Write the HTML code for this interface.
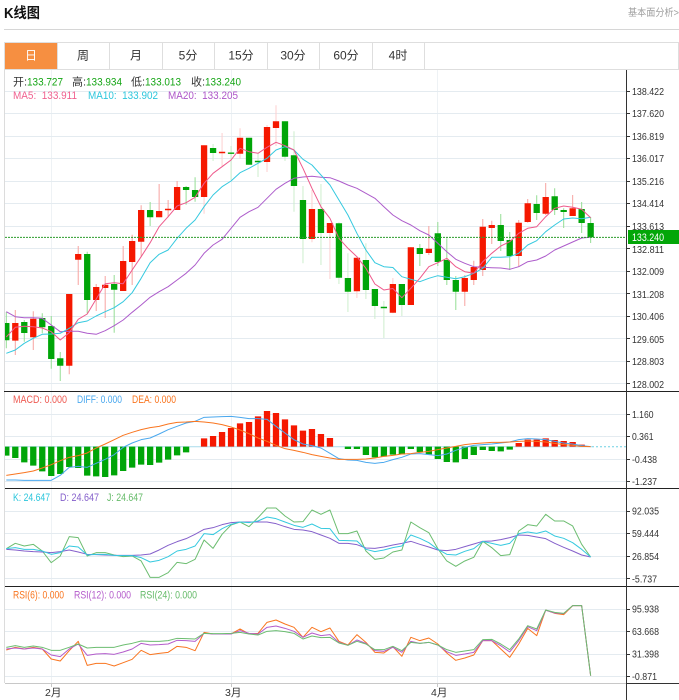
<!DOCTYPE html>
<html lang="zh">
<head>
<meta charset="utf-8">
<title>K线图</title>
<style>
html,body{margin:0;padding:0;background:#fff;width:679px;height:700px;overflow:hidden}
svg{display:block;position:absolute;left:0;top:0;filter:blur(.3px)}
text{font-family:"Liberation Sans","Noto Sans CJK SC",sans-serif;font-size:11px;fill:#333;white-space:pre}
.ax{font-size:10px;fill:#333}
.n{fill:none;stroke-linejoin:round;vector-effect:non-scaling-stroke}
</style>
</head>
<body>
<svg width="679" height="700" viewBox="0 0 679 700" xmlns="http://www.w3.org/2000/svg">
<defs><clipPath id="c"><rect x="5" y="70" width="621" height="630"/></clipPath></defs>

<text x="4" y="18" style="font-size:14.5px;font-weight:bold;fill:#111" textLength="36" lengthAdjust="spacingAndGlyphs">K线图</text>
<text x="628" y="16" style="font-size:10px;fill:#a0a0a0" textLength="51" lengthAdjust="spacingAndGlyphs">基本面分析&gt;</text>
<path d="M4 29.5H679" stroke="#d6d6d6" stroke-width="1"/>

<!-- tabs -->
<rect x="5" y="43" width="52.5" height="26" fill="#f68f41"/>
<path d="M4.5 42.5H678.5V69.5H4.5Z M57.5 43V69 M109.5 43V69 M162.5 43V69 M214.5 43V69 M267.5 43V69 M319.5 43V69 M372.5 43V69 M424.5 43V69" fill="none" stroke="#dedede" stroke-width="1"/>
<text x="31" y="59.5" text-anchor="middle" style="font-size:12px;fill:#fff">日</text>
<text x="83" y="59.5" text-anchor="middle" style="font-size:12px">周</text>
<text x="136" y="59.5" text-anchor="middle" style="font-size:12px">月</text>
<text x="188" y="59.5" text-anchor="middle" style="font-size:12px">5分</text>
<text x="241" y="59.5" text-anchor="middle" style="font-size:12px">15分</text>
<text x="293" y="59.5" text-anchor="middle" style="font-size:12px">30分</text>
<text x="346" y="59.5" text-anchor="middle" style="font-size:12px">60分</text>
<text x="398" y="59.5" text-anchor="middle" style="font-size:12px">4时</text>

<!-- grid -->
<path d="M51.5 70V683 M231.5 70V683 M437.5 70V683" stroke="#eef2f5" stroke-width="1"/>
<path d="M5 91.5H626 M5 113.5H626 M5 136.5H626 M5 158.5H626 M5 181.5H626 M5 203.5H626 M5 226.5H626 M5 248.5H626 M5 271.5H626 M5 293.5H626 M5 316.5H626 M5 338.5H626 M5 361.5H626 M5 383.5H626 M5 414.5H626 M5 436.5H626 M5 459.5H626 M5 481.5H626 M5 511.5H626 M5 533.5H626 M5 556.5H626 M5 578.5H626 M5 609.5H626 M5 631.5H626 M5 654.5H626 M5 676.5H626" stroke="#e4ebf0" stroke-width="1"/>
<path d="M4.5 70V683" stroke="#dcdcdc" stroke-width="1"/>

<g clip-path="url(#c)">
<!-- wicks -->
<g transform="translate(6.3,0) scale(8.99,1)" fill="none">
<path class="n" stroke="#f7a3a0" stroke-width="1" d="M1 310V355M3 311.3V350M7 294V374.3M8 246V285M10 284V311M11 276V318M13 246V291M14 234.7V285M15 205.3V256.7M17 184V217.3M18 200V217.3M19 181V210"/>
<path class="n" stroke="#95de95" stroke-width="1" d="M0 312V348.3M2 320V341.7M4 313.3V333.3M5 316V368.7M6 352V381M9 251.7V313.3M12 275V332.7M16 202V226M20 186V204.7M21 177.3V201.7"/>
<path class="n" stroke="#fdcfcf" stroke-width="1" d="M22 145.3V213.7M24 133V166M26 128.3V158.7M29 125V172M30 105.3V146M34 190V242.3M36 223V279M39 257.7V298M43 278V313.3"/>
<path class="n" stroke="#cdeecd" stroke-width="1" d="M23 144V161M25 146V180M27 137.7V164.7M28 153.3V177M31 121.3V161M32 131.3V211.7M33 186V263.3M35 184V265M37 222.3V284M38 253.3V312M40 243.3V299M41 289V319M42 301V338M44 284V316"/>
<path class="n" stroke="#f7a3a0" stroke-width="1" d="M45 247.3V305M47 226V255M51 275V306M52 260.7V285M53 219V276M54 220.7V244M57 220V266.7M58 199V222.7M60 183V215M63 195V216"/>
<path class="n" stroke="#95de95" stroke-width="1" d="M46 244V266M48 222V266M49 238.3V285M50 276V310M55 214V251M56 232V270M59 195.3V220M61 188.3V215M62 208.3V228M64 202V233M65 217V243"/>
<!-- bodies -->
<path class="n" stroke="#f51800" stroke-width="6.3" d="M1 323V340.6M3 318.7V337.3M7 294V365.7M8 254V259.7M10 287V300M11 284.7V288M13 261V291M14 241V262M15 210V241.7M17 211V217.3M18 208.8V210.2M19 187V210M22 145.3V197M24 151.8V153.2M26 137.7V153.7M29 127V162M30 121.3V128M34 209V239M36 223V233M39 257.7V291.3M43 284V312.7M45 247.3V305M47 248.7V253M51 278V291.7M52 267V280M53 226.7V270M54 225V228M57 222.7V256M58 203.3V222M60 197V213.7M63 208.3V216"/>
<path class="n" stroke="#00a508" stroke-width="6.3" d="M0 323V340.3M2 322V333M4 318V327.3M5 326V359M6 358.3V365.7M9 254V300M12 284V289.7M16 210V217.3M20 187V190M21 190V197M23 148V153M25 152.5V153.9M27 137.7V164.7M28 160.8V162.2M31 121.3V156.7M32 155.3V186M33 200V239M35 209V233M37 223.3V277.7M38 278V291.7M40 260V290M41 289V306M42 306.8V308.2M44 284V305M46 248V254M48 233.3V262M49 260V280M50 280V291.7M55 225V241M56 240V256M59 204V213M61 196.3V210M62 210V212M64 209V223M65 223V237.3"/>
<!-- MA lines -->
<polyline class="n" stroke="#ad5ccb" stroke-width="1" points="0,311.7 1,316.7 2,317.7 3,317.7 4,318.3 5,325 6,331.7 7,331.3 8,331.3 9,333.3 10,334.3 11,330.7 12,325.7 13,320 14,312.3 15,305 16,297.3 17,291.7 18,286.7 19,280 20,273.3 21,265 22,253.3 23,245 24,239.3 25,228.3 26,217.3 27,211.7 28,207.3 29,198.3 30,189.3 31,183.3 32,178.3 33,177 34,176.3 35,177.3 36,177.7 37,181 38,185 39,188.3 40,193.3 41,198.3 42,206.7 43,215 44,220.7 45,225 46,230.7 47,235 48,243.3 49,251.7 50,259.3 51,263.3 52,266.7 53,267.3 54,267.7 55,268 56,269.3 57,266.7 58,261.7 59,260 60,256 61,250 62,246 63,242 64,238 65,237.3"/>
<polyline class="n" stroke="#35c9df" stroke-width="1" points="0,353.3 1,350 2,343.3 3,338.3 4,334.3 5,334 6,333.3 7,328.3 8,322.7 9,321 10,316 11,311.7 12,307.7 13,301.7 14,292.7 15,278.3 16,262.7 17,254.3 18,250 19,238.3 20,228.3 21,220 22,206.7 23,195 24,186.7 25,181 26,172.7 27,168.3 28,163.3 29,158.3 30,150 31,146.7 32,150 33,159.3 34,165 35,175 36,185 37,200 38,215 39,233.3 40,250 41,262.7 42,266.7 43,267.5 44,276.7 45,279.3 46,281.7 47,278.3 48,275.7 49,277.3 50,278.7 51,276.7 52,273.3 53,268.3 54,257.3 55,257.3 56,256.7 57,253.3 58,245 59,240.7 60,231.7 61,225 62,219 63,218 64,218.7 65,217.3"/>
<polyline class="n" stroke="#ee5a8c" stroke-width="1" points="0,337 1,327.3 2,326.3 3,326.7 4,328 5,331.7 6,340 7,332.7 8,319.3 9,314 10,299 11,283.7 12,282.7 13,283.7 14,270 15,256.7 16,242.7 17,226.7 18,216.7 19,206 20,202.7 21,197.3 22,183.3 23,173.3 24,166.7 25,160 26,148.3 27,151.7 28,153.3 29,147.3 30,142.3 31,145.7 32,150 33,168.3 34,188.3 35,206.7 36,218.3 37,238.3 38,248.3 39,256.7 40,268.3 41,284 42,290 43,288.5 44,297.7 45,288.3 46,278.3 47,266.7 48,262.7 49,258.3 50,266.7 51,271.7 52,273.3 53,261.7 54,253.3 55,246 56,241.7 57,233.3 58,228.3 59,226.7 60,216.7 61,208.3 62,206 63,207.3 64,209.3 65,217.7"/>
</g>
<path d="M5 237.4H626" stroke="#2c9c2c" stroke-width="1" stroke-dasharray="2 1" fill="none"/>

<!-- MACD -->
<path d="M5 446.7H592" stroke="#a9dcec" stroke-width="1"/>
<path d="M592 446.7H626" stroke="#6fd0e4" stroke-width="1" stroke-dasharray="2 2"/>
<g transform="translate(6.3,388) scale(8.99,.3333)" fill="none">
<path class="n" stroke="#00a508" stroke-width="6.3" d="M0 176V203M1 176V210M2 176V223M3 176V233M4 176V250M5 176V264M6 176V258M7 176V237M8 176V240M9 176V263M10 176V265M11 176V267M12 176V262M13 176V249M14 176V239M15 176V230M16 176V231M17 176V224M18 176V215M19 176V202M20 176V193M38 176V183M39 176V183M40 176V201M41 176V208M42 176V206M43 176V200M44 176V199M45 176V183M46 176V192M47 176V199M48 176V213M49 176V222M50 176V223M51 176V213M52 176V201M53 176V186M54 176V189M55 176V190M56 176V185"/>
<path class="n" stroke="#f51800" stroke-width="6.3" d="M22 176V151M23 176V144M24 176V132M25 176V120M26 176V106M27 176V102M28 176V85M29 176V69M30 176V75M31 176V94M32 176V112M33 176V128M34 176V123M35 176V138M36 176V150M57 176V165M58 176V155M59 176V155M60 176V151M61 176V156M62 176V159M63 176V162M64 176V170"/>
<polyline class="n" stroke="#4aa8ee" stroke-width="1" points="0,276 1,276 2,277 3,277 4,277 5,277 6,262 7,238 8,235 9,238 10,226 11,214 12,200 13,178 14,165 15,155 16,150 17,138 18,125 19,115 20,105 21,100 22,88 23,87 24,86 25,85 26,88 27,92 28,92 29,94 30,115 31,135 32,155 33,168 34,173 35,180 36,196 37,212 38,216 39,217 40,223 41,226 42,223 43,215 44,208 45,198 46,197 47,200 48,203 49,198 50,187 51,178 52,172 53,170 54,168 55,165 56,162 57,155 58,152 59,153 60,155 61,160 62,165 63,168 64,173 65,176"/>
<polyline class="n" stroke="#f9751f" stroke-width="1" points="0,262 1,258 2,254 3,249 4,240 5,230 6,218 7,208 8,203 9,195 10,180 11,168 12,155 13,142 14,133 15,125 16,119 17,115 18,108 19,103 20,102 21,100 22,102 23,105 24,110 25,117 26,126 27,137 28,150 29,160 30,172 31,182 32,187 33,193 34,200 35,205 36,210 37,214 38,214 39,214 40,213 41,210 42,205 43,202 44,198 45,197 46,193 47,190 48,185 49,180 50,175 51,170 52,167 53,165 54,163 55,163 56,162 57,160 58,159 59,160 60,162 61,166 62,170 63,172 64,175 65,176"/>
</g>

<!-- KDJ -->
<g transform="translate(6.3,486) scale(8.99,.3333)" fill="none">
<polyline class="n" stroke="#6cbd70" stroke-width="1" points="0,188 1,172 2,180 3,175 4,195 5,230 6,210 7,152 8,155 9,210 10,200 11,200 12,207 13,212 14,210 15,225 16,274 17,274 18,260 19,229 20,233 21,220 22,162 23,187 24,145 25,117 26,108 27,122 28,95 29,66 30,66 31,90 32,108 33,107 34,72 35,85 36,72 37,143 38,143 39,135 40,195 41,220 42,216 43,198 44,192 45,108 46,125 47,140 48,188 49,225 50,241 51,225 52,214 53,166 54,185 55,209 56,206 57,135 58,116 59,120 60,85 61,105 62,105 63,120 64,175 65,213"/>
<polyline class="n" stroke="#8560cb" stroke-width="1" points="0,190 1,192 2,195 3,197 4,198 5,200 6,197 7,192 8,198 9,205 10,206 11,207 12,208 13,208 14,208 15,207 16,204 17,192 18,178 19,167 20,158 21,145 22,130 23,125 24,116 25,110 26,108 27,108 28,108 29,108 30,113 31,122 32,130 33,132 34,137 35,147 36,157 37,172 38,172 39,176 40,186 41,187 42,183 43,177 44,172 45,166 46,175 47,183 48,192 49,194 50,190 51,182 52,174 53,166 54,165 55,161 56,155 57,147 58,148 59,153 60,158 61,172 62,184 63,195 64,207 65,213"/>
<polyline class="n" stroke="#35c9df" stroke-width="1" points="0,188 1,185 2,190 3,190 4,195 5,205 6,200 7,180 8,183 9,207 10,205 11,205 12,208 13,209 14,209 15,215 16,228 17,223 18,212 19,195 20,190 21,180 22,143 23,146 24,128 25,115 26,108 27,110 28,105 29,93 30,98 31,108 32,118 33,124 34,114 35,127 36,128 37,163 38,164 39,165 40,190 41,197 42,192 43,185 44,180 45,147 46,157 47,170 48,190 49,205 50,207 51,196 52,188 53,166 54,172 55,178 56,172 57,143 58,138 59,142 60,135 61,150 62,157 63,170 64,190 65,213"/>
</g>

<!-- RSI -->
<g transform="translate(6.3,584) scale(8.99,.3333)" fill="none">
<polyline class="n" stroke="#f9751f" stroke-width="1" points="0,198 1,190 2,195 3,190 4,195 5,225 6,231 7,200 8,172 9,244 10,238 11,238 12,246 13,236 14,226 15,199 16,212 17,208 18,205 19,187 20,190 21,200 22,145 23,150 24,150 25,150 26,135 27,150 28,148 29,115 30,108 31,120 32,130 33,160 34,130 35,143 36,132 37,172 38,183 39,152 40,175 41,205 42,207 43,188 44,217 45,160 46,170 47,162 48,180 49,207 50,229 51,222 52,213 53,170 54,170 55,195 56,220 57,180 58,133 59,155 60,78 61,88 62,92 63,65 64,65 65,275"/>
<polyline class="n" stroke="#b45ccb" stroke-width="1" points="0,195 1,192 2,195 3,192 4,195 5,213 6,218 7,195 8,180 9,214 10,210 11,209 12,211 13,204 14,195 15,178 16,183 17,182 18,180 19,169 20,170 21,172 22,148 23,150 24,150 25,150 26,140 27,148 28,150 29,130 30,126 31,133 32,142 33,160 34,147 35,155 36,152 37,175 38,184 39,168 40,178 41,200 42,202 43,190 44,205 45,172 46,178 47,175 48,183 49,203 50,214 51,210 52,205 53,170 54,170 55,185 56,204 57,170 58,128 59,140 60,79 61,87 62,89 63,65 64,65 65,275"/>
<polyline class="n" stroke="#6cbd70" stroke-width="1" points="0,190 1,185 2,190 3,186 4,190 5,199 6,199 7,190 8,180 9,192 10,190 11,190 12,190 13,183 14,178 15,171 16,172 17,172 18,170 19,163 20,164 21,165 22,148 23,149 24,149 25,148 26,145 27,150 28,153 29,142 30,140 31,143 32,148 33,165 34,156 35,161 36,160 37,177 38,184 39,172 40,180 41,197 42,197 43,187 44,200 45,175 46,178 47,175 48,183 49,197 50,205 51,201 52,197 53,167 54,166 55,180 56,197 57,165 58,125 59,135 60,78 61,85 62,88 63,65 64,65 65,275"/>
</g>
</g>

<!-- separators & axis -->
<path d="M4 391.5H679 M5 488.5H679 M5 586.5H679" stroke="#222" stroke-width="1"/>
<path d="M5 683.5H626" stroke="#c8c8c8" stroke-width="1"/>
<path d="M626.5 683.5H679" stroke="#333" stroke-width="1"/>
<path d="M626.5 70V700" stroke="#333" stroke-width="1"/>
<path d="M51.5 683V687 M231.5 683V687 M437.5 683V687" stroke="#c8c8c8" stroke-width="1"/>
<path d="M627 91.5h3M627 113.5h3M627 136.5h3M627 158.5h3M627 181.5h3M627 203.5h3M627 226.5h3M627 248.5h3M627 271.5h3M627 293.5h3M627 316.5h3M627 338.5h3M627 361.5h3M627 383.5h3M627 414.5h3M627 436.5h3M627 459.5h3M627 481.5h3M627 511.5h3M627 533.5h3M627 556.5h3M627 578.5h3M627 609.5h3M627 631.5h3M627 654.5h3M627 676.5h3" stroke="#333" stroke-width="1"/>

<!-- axis labels -->
<text class="ax" x="632" y="95" textLength="32" lengthAdjust="spacingAndGlyphs">138.422</text>
<text class="ax" x="632" y="117" textLength="32" lengthAdjust="spacingAndGlyphs">137.620</text>
<text class="ax" x="632" y="140" textLength="32" lengthAdjust="spacingAndGlyphs">136.819</text>
<text class="ax" x="632" y="162" textLength="32" lengthAdjust="spacingAndGlyphs">136.017</text>
<text class="ax" x="632" y="185" textLength="32" lengthAdjust="spacingAndGlyphs">135.216</text>
<text class="ax" x="632" y="207" textLength="32" lengthAdjust="spacingAndGlyphs">134.414</text>
<text class="ax" x="632" y="230" textLength="32" lengthAdjust="spacingAndGlyphs">133.613</text>
<text class="ax" x="632" y="253" textLength="32" lengthAdjust="spacingAndGlyphs">132.811</text>
<text class="ax" x="632" y="275" textLength="32" lengthAdjust="spacingAndGlyphs">132.009</text>
<text class="ax" x="632" y="298" textLength="32" lengthAdjust="spacingAndGlyphs">131.208</text>
<text class="ax" x="632" y="320" textLength="32" lengthAdjust="spacingAndGlyphs">130.406</text>
<text class="ax" x="632" y="343" textLength="32" lengthAdjust="spacingAndGlyphs">129.605</text>
<text class="ax" x="632" y="365" textLength="32" lengthAdjust="spacingAndGlyphs">128.803</text>
<text class="ax" x="632" y="388" textLength="32" lengthAdjust="spacingAndGlyphs">128.002</text>
<text class="ax" x="632" y="418" textLength="21.5" lengthAdjust="spacingAndGlyphs">1.160</text>
<text class="ax" x="632" y="440" textLength="21.5" lengthAdjust="spacingAndGlyphs">0.361</text>
<text class="ax" x="632" y="463" textLength="25" lengthAdjust="spacingAndGlyphs">-0.438</text>
<text class="ax" x="632" y="485" textLength="25" lengthAdjust="spacingAndGlyphs">-1.237</text>
<text class="ax" x="632" y="514.5" textLength="27" lengthAdjust="spacingAndGlyphs">92.035</text>
<text class="ax" x="632" y="537" textLength="27" lengthAdjust="spacingAndGlyphs">59.444</text>
<text class="ax" x="632" y="560" textLength="27" lengthAdjust="spacingAndGlyphs">26.854</text>
<text class="ax" x="632" y="582.5" textLength="25" lengthAdjust="spacingAndGlyphs">-5.737</text>
<text class="ax" x="632" y="612.5" textLength="27" lengthAdjust="spacingAndGlyphs">95.938</text>
<text class="ax" x="632" y="635" textLength="27" lengthAdjust="spacingAndGlyphs">63.668</text>
<text class="ax" x="632" y="657.5" textLength="27" lengthAdjust="spacingAndGlyphs">31.398</text>
<text class="ax" x="632" y="680" textLength="25" lengthAdjust="spacingAndGlyphs">-0.871</text>
<rect x="628" y="230" width="51" height="14" fill="#03a608"/>
<text x="632" y="241" style="font-size:11px;fill:#fff" textLength="32" lengthAdjust="spacingAndGlyphs">133.240</text>

<text x="45" y="696" style="font-size:10.5px">2月</text>
<text x="225" y="696" style="font-size:10.5px">3月</text>
<text x="431" y="696" style="font-size:10.5px">4月</text>

<!-- legends -->
<text x="13" y="85.5">开:</text><text x="27" y="85.5" style="fill:#14a514" textLength="36" lengthAdjust="spacingAndGlyphs">133.727</text>
<text x="72" y="85.5">高:</text><text x="86" y="85.5" style="fill:#14a514" textLength="36" lengthAdjust="spacingAndGlyphs">133.934</text>
<text x="131" y="85.5">低:</text><text x="145" y="85.5" style="fill:#14a514" textLength="36" lengthAdjust="spacingAndGlyphs">133.013</text>
<text x="191" y="85.5">收:</text><text x="205" y="85.5" style="fill:#14a514" textLength="36" lengthAdjust="spacingAndGlyphs">133.240</text>

<text x="13" y="99" style="fill:#f0608f" textLength="64" lengthAdjust="spacingAndGlyphs">MA5:  133.911</text>
<text x="88" y="99" style="fill:#2cc6dc" textLength="70" lengthAdjust="spacingAndGlyphs">MA10:  133.902</text>
<text x="168" y="99" style="fill:#ad55c8" textLength="70" lengthAdjust="spacingAndGlyphs">MA20:  133.205</text>

<text x="13" y="403" style="fill:#ee5a52" textLength="54" lengthAdjust="spacingAndGlyphs">MACD: 0.000</text>
<text x="77" y="403" style="fill:#4aa8ee" textLength="45" lengthAdjust="spacingAndGlyphs">DIFF: 0.000</text>
<text x="132" y="403" style="fill:#f9751f" textLength="44" lengthAdjust="spacingAndGlyphs">DEA: 0.000</text>

<text x="13" y="501" style="fill:#2cc6dc" textLength="37" lengthAdjust="spacingAndGlyphs">K: 24.647</text>
<text x="60" y="501" style="fill:#8560cb" textLength="39" lengthAdjust="spacingAndGlyphs">D: 24.647</text>
<text x="107" y="501" style="fill:#66bb6a" textLength="36" lengthAdjust="spacingAndGlyphs">J: 24.647</text>

<text x="13" y="598.5" style="fill:#f9751f" textLength="51" lengthAdjust="spacingAndGlyphs">RSI(6): 0.000</text>
<text x="74" y="598.5" style="fill:#b45ccb" textLength="57" lengthAdjust="spacingAndGlyphs">RSI(12): 0.000</text>
<text x="140" y="598.5" style="fill:#66bb6a" textLength="57" lengthAdjust="spacingAndGlyphs">RSI(24): 0.000</text>
</svg>
</body>
</html>
